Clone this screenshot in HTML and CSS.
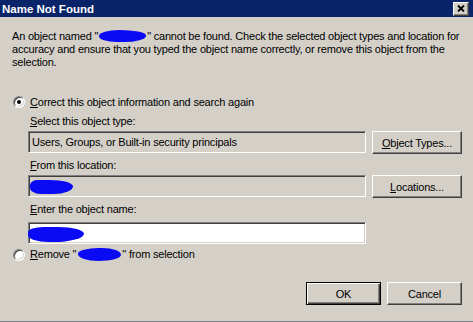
FILE: index.html
```html
<!DOCTYPE html>
<html lang="en">

<head>
    <meta charset="UTF-8">
    <title>Name Not Found</title>
    <link rel="stylesheet" href="styles.css">
</head>

<body>
    <div class="dialog">
        <div class="titlebar">
            <span class="title">Name Not Found</span>
            <span class="close">
                <svg width="8" height="7" viewBox="0 0 8 7">
                    <path d="M1 0.5L7 6.5M7 0.5L1 6.5" stroke="#000" stroke-width="1.8" fill="none" />
                </svg>
            </span>
        </div>

        <div class="content">
            <p class="message">An object named "<span class="blot blot-msg"></span>" cannot be found. Check the selected object types and location for accuracy and ensure that you typed the object name correctly, or remove this object from the selection.</p>

            <div class="option">
                <span class="radio checked"></span>
                <span><u>C</u>orrect this object information and search again</span>
            </div>

            <div class="fields">
                <div class="label label-first"><u>S</u>elect this object type:</div>
                <div class="row">
                    <div class="field readonly">Users, Groups, or Built-in security principals</div>
                    <button class="btn wide"><u>O</u>bject Types...</button>
                </div>

                <div class="label"><u>F</u>rom this location:</div>
                <div class="row">
                    <div class="field readonly"><span class="blot blot-location"></span></div>
                    <button class="btn wide"><u>L</u>ocations...</button>
                </div>

                <div class="label label-name"><u>E</u>nter the object name:</div>
                <div class="row row-name">
                    <div class="field"><span class="blot blot-name"></span></div>
                </div>
            </div>

            <div class="option option-remove">
                <span class="radio"></span>
                <span><u>R</u>emove "<span class="blot blot-remove"></span>" from selection</span>
            </div>

            <div class="actions">
                <button class="btn default">OK</button>
                <button class="btn">Cancel</button>
            </div>
        </div>
    </div>
</body>

</html>
```

FILE: styles.css
```css
/* Classic window look */
body {
    margin: 0;
    background: #d4d0c8;
    font-family: "Liberation Sans", Arial, sans-serif;
    font-size: 11px;
    letter-spacing: -0.2px;
    color: #000;
}

.dialog {
    width: 473px;
    height: 322px;
    box-sizing: border-box;
    display: flex;
    flex-direction: column;
    border-bottom: 1px solid #808080;
}

/* Title bar */
.titlebar {
    height: 17px;
    background: #0a246a;
    display: flex;
    align-items: center;
    justify-content: space-between;
    padding: 0 4px 0 2px;
}

.title {
    color: #fff;
    font-weight: bold;
    font-size: 11.5px;
    letter-spacing: 0;
}

.close {
    width: 16px;
    height: 14px;
    box-sizing: border-box;
    background: #d4d0c8;
    border: 1px solid;
    border-color: #fff #404040 #404040 #fff;
    box-shadow: inset -1px -1px #808080;
    display: flex;
    align-items: center;
    justify-content: center;
}

/* Body */
.content {
    flex: 1;
    padding: 13px 11px 0 12px;
    display: flex;
    flex-direction: column;
}

.message {
    margin: 0 -8px 0 0;
    line-height: 13px;
}

.option {
    display: flex;
    align-items: center;
    gap: 5px;
    height: 13px;
    margin: 26px 0 0 1px;
}

.option-remove {
    margin-top: 4px;
}

.radio {
    width: 12px;
    height: 12px;
    box-sizing: border-box;
    border-radius: 50%;
    background: #fff;
    border: 1px solid;
    border-color: #808080 #fff #fff #808080;
    box-shadow: inset 1px 1px #404040, inset -1px -1px #d4d0c8;
    display: flex;
    align-items: center;
    justify-content: center;
}

.radio.checked::after {
    content: "";
    width: 4px;
    height: 4px;
    border-radius: 50%;
    background: #000;
}

/* Fields */
.fields {
    margin-left: 16px;
}

.label {
    height: 13px;
    line-height: 13px;
    padding-left: 2px;
    margin-top: 5px;
}

.label-first {
    margin-top: 7px;
}

.row {
    display: flex;
    align-items: flex-start;
    gap: 6px;
    margin-top: 3px;
}

.row-name {
    margin-top: 6px;
}

.field {
    width: 338px;
    height: 22px;
    box-sizing: border-box;
    background: #fff;
    border: 1px solid;
    border-color: #808080 #fff #fff #808080;
    box-shadow: inset 1px 1px #404040, inset -1px -1px #d4d0c8;
    padding: 0 3px;
    display: flex;
    align-items: center;
}

.field.readonly {
    background: #d4d0c8;
}

/* Buttons */
.btn {
    width: 75px;
    height: 23px;
    box-sizing: border-box;
    padding: 0;
    background: #d4d0c8;
    font-family: inherit;
    font-size: 11px;
    letter-spacing: -0.2px;
    color: #000;
    border: 1px solid;
    border-color: #fff #404040 #404040 #fff;
    box-shadow: inset -1px -1px #808080;
}

.btn.wide {
    width: 90px;
}

.btn.default {
    border-color: #000;
    box-shadow: inset 1px 1px #fff, inset -1px -1px #404040, inset -2px -2px #808080;
}

.actions {
    display: flex;
    justify-content: flex-end;
    gap: 6px;
    margin-top: 21px;
}

/* Blue marker scribbles over names */
.blot {
    display: inline-block;
    background: #0a0af5;
}

.blot-msg {
    width: 47px;
    height: 12px;
    margin: 0 1px;
    vertical-align: -2px;
    border-radius: 45% 60% 50% 40% / 50% 45% 55% 50%;
}

.blot-location {
    width: 43px;
    height: 14px;
    margin: 2px 0 0 -2px;
    border-radius: 20% 60% 50% 30% / 40% 50% 60% 50%;
}

.blot-name {
    width: 56px;
    height: 15px;
    margin: 2px 0 0 -4px;
    border-radius: 30% 50% 60% 40% / 40% 50% 60% 50%;
}

.blot-remove {
    width: 43px;
    height: 13px;
    margin: 0 1px 0 2px;
    vertical-align: -3px;
    border-radius: 50% 45% 55% 50% / 45% 55% 50% 55%;
}
```
